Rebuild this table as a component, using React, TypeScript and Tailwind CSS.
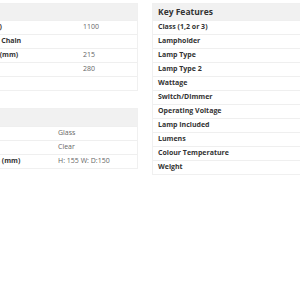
const specs = [
  { label: 'Cable Length (mm)', value: '1100' },
  { label: 'Adjustable Cable / Chain', value: '' },
  { label: 'Max. Drop Length (mm)', value: '215' },
  { label: 'Min Drop (mm)', value: '280' },
  { label: 'IP Rating', value: '' },
];

const shade = [
  { label: 'Shade Material', value: 'Glass' },
  { label: 'Shade Colour', value: 'Clear' },
  { label: 'Shade Dimensions (mm)', value: 'H: 155 W: D:150' },
];

const features = [
  'Class (1,2 or 3)',
  'Lampholder',
  'Lamp Type',
  'Lamp Type 2',
  'Wattage',
  'Switch/Dimmer',
  'Operating Voltage',
  'Lamp Included',
  'Lumens',
  'Colour Temperature',
  'Weight',
];

function Table({
  title,
  rows,
  labelW,
  headerH,
}: {
  title: string;
  rows: { label: string; value: string }[];
  labelW: string;
  headerH: string;
}) {
  return (
    <div className="border border-[#f0f0f0] bg-white">
      <div className={`${headerH} bg-[#f1f1f1] px-[5px] flex items-center text-[8.5px] font-bold text-[#333]`}>
        {title}
      </div>
      {rows.map((r) => (
        <div key={r.label} className="flex h-[14px] items-center border-t border-[#efefef] text-[7px]">
          <div className={`${labelW} shrink-0 pl-[5px] font-bold text-[#333] whitespace-nowrap`}>{r.label}</div>
          <div className="text-[#666] whitespace-nowrap">{r.value}</div>
        </div>
      ))}
    </div>
  );
}

export default function App() {
  return (
    <div
      className="h-[300px] w-[300px] overflow-hidden bg-white"
      style={{ fontFamily: '"Open Sans", "Liberation Sans", sans-serif' }}
    >
      <div className="flex gap-[14px] pt-[3px] ml-[-70px]">
        <div className="w-[208px] shrink-0 flex flex-col gap-[17px]">
          <Table title="Dimensions" rows={specs} labelW="w-[152px]" headerH="h-[16px]" />
          <Table title="Shade" rows={shade} labelW="w-[127px]" headerH="h-[17px]" />
        </div>
        <div className="w-[200px] shrink-0 border border-[#f0f0f0] bg-white">
          <div className="h-[16px] bg-[#f1f1f1] px-[5px] flex items-center text-[8.5px] font-bold text-[#333]">
            Key Features
          </div>
          {features.map((f) => (
            <div key={f} className="flex h-[14px] items-center border-t border-[#efefef] px-[5px] text-[7px] font-bold text-[#333]">
              {f}
            </div>
          ))}
        </div>
      </div>
    </div>
  );
}
